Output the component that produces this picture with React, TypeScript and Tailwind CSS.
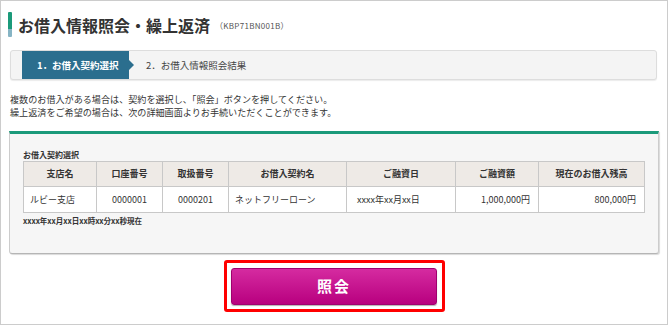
import React from "react";

const rows = [
  {
    branch: "ルビー支店",
    account: "0000001",
    handling: "0000201",
    name: "ネットフリーローン",
    date: "xxxx年xx月xx日",
    amount: "1,000,000円",
    balance: "800,000円",
  },
];

export default function App() {
  return (
    <div className="w-[668px] h-[325px] bg-white border border-[#cccccc] flex flex-col text-[#333333] font-['Noto_Sans_CJK_JP','Noto_Sans',sans-serif] overflow-hidden">
      {/* 見出し */}
      <div className="flex items-center pl-[7px] pt-[11px]">
        <div className="w-[4px] h-[25px] rounded-[1px] bg-[linear-gradient(to_bottom,#1b9a7a_0%,#1b9a7a_70%,#86b4c4_70%,#86b4c4_100%)]" />
        <h1 className="ml-[6px] text-[16px] leading-[20px] font-bold text-[#333333]">
          お借入情報照会・繰上返済
        </h1>
        <span className="ml-[5px] mt-[3px] text-[8px] text-[#555555] tracking-[0.3px]">
          （KBP71BN001B）
        </span>
      </div>

      {/* ステップ */}
      <div className="ml-[9px] mt-[13px] w-[647px] h-[30px] border border-[#dddddd] rounded-[3px] bg-[#f4f4f4] flex items-stretch shadow-[0_1px_1px_rgba(0,0,0,0.08)]">
        <div className="ml-[11px] w-[107px] bg-[#2b6e8e] flex items-center pl-[15px] text-white text-[9.5px] font-bold relative">
          1．お借入契約選択
          <span className="absolute right-[-5px] top-1/2 -translate-y-1/2 w-0 h-0 border-y-[5px] border-y-transparent border-l-[5px] border-l-[#2b6e8e]" />
        </div>
        <div className="flex items-center pl-[17px] text-[9.5px] text-[#444444]">
          2．お借入情報照会結果
        </div>
      </div>

      {/* 説明 */}
      <div className="ml-[9px] mt-[13px] text-[9.1px] leading-[13px] text-[#333333]">
        <p>複数のお借入がある場合は、契約を選択し、「照会」ボタンを押してください。</p>
        <p>繰上返済をご希望の場合は、次の詳細画面よりお手続いただくことができます。</p>
      </div>

      {/* 契約一覧 */}
      <div className="ml-[8px] mt-[12px] w-[650px] h-[123px] bg-[#f6f6f6] border-t-[3px] border-t-[#1b9a7a] border-x border-x-[#cccccc] border-b border-b-[#b5b5b5] rounded-b-[3px] shadow-[1px_1px_1px_rgba(0,0,0,0.15)] px-[13px] pt-[16px]">
        <div className="text-[8px] leading-[10px] font-bold text-[#333333]">お借入契約選択</div>
        <table className="mt-[1px] w-[622px] border-collapse text-[9px] text-[#333333] bg-white">
          <thead>
            <tr className="bg-[#eeeae6] h-[25px]">
              <th className="w-[73px] border border-[#c8c8c8] font-bold">支店名</th>
              <th className="w-[66px] border border-[#c8c8c8] font-bold">口座番号</th>
              <th className="w-[66px] border border-[#c8c8c8] font-bold">取扱番号</th>
              <th className="w-[118px] border border-[#c8c8c8] font-bold">お借入契約名</th>
              <th className="w-[109px] border border-[#c8c8c8] font-bold">ご融資日</th>
              <th className="w-[83px] border border-[#c8c8c8] font-bold">ご融資額</th>
              <th className="border border-[#c8c8c8] font-bold">現在のお借入残高</th>
            </tr>
          </thead>
          <tbody>
            {rows.map((r) => (
              <tr key={r.account} className="h-[26px]">
                <td className="border border-[#c8c8c8] pl-[6px]">{r.branch}</td>
                <td className="border border-[#c8c8c8] text-center">{r.account}</td>
                <td className="border border-[#c8c8c8] text-center">{r.handling}</td>
                <td className="border border-[#c8c8c8] pl-[6px]">{r.name}</td>
                <td className="border border-[#c8c8c8] pl-[10px]">{r.date}</td>
                <td className="border border-[#c8c8c8] text-right pr-[8px]">{r.amount}</td>
                <td className="border border-[#c8c8c8] text-right pr-[8px]">{r.balance}</td>
              </tr>
            ))}
          </tbody>
        </table>
        <div className="mt-[3px] text-[7.5px] leading-[10px] font-bold text-[#333333]">
          xxxx年xx月xx日xx時xx分xx秒現在
        </div>
      </div>

      {/* 照会ボタン */}
      <div className="mt-[6px] mx-auto w-[221px] h-[52px] border-[3px] border-[#ff0000] rounded-[3px] flex items-center justify-center">
        <button className="w-[206px] h-[37px] rounded-[3px] bg-[linear-gradient(to_bottom,#d52ba0,#b8007f)] border border-[#a0006e] shadow-[0_1px_1px_rgba(0,0,0,0.3)] text-white text-[15px] font-bold tracking-[2px]">
          照会
        </button>
      </div>
    </div>
  );
}
